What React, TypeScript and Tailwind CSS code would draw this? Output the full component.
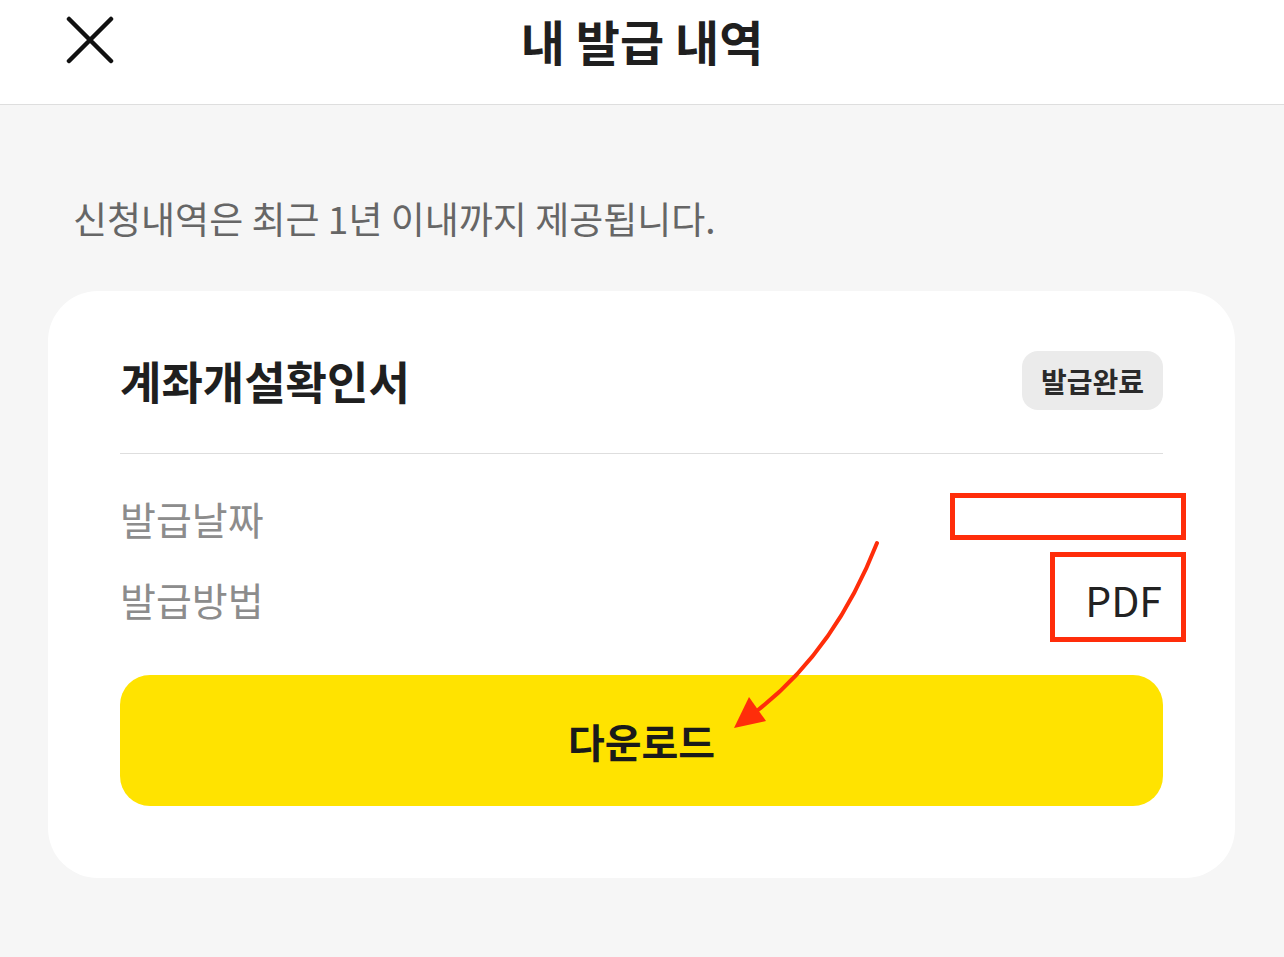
import React from "react";

const font = { fontFamily: '"Noto Sans CJK KR", "Noto Sans", sans-serif' };

const CloseIcon: React.FC = () => (
  <svg width="48" height="48" viewBox="0 0 48 48" fill="none">
    <path d="M3 3L45 45M45 3L3 45" stroke="#111" strokeWidth="4.5" strokeLinecap="round" />
  </svg>
);

const InfoRow: React.FC<{ label: string; value?: string }> = ({ label, value }) => (
  <div className="flex items-center justify-between h-[81px]">
    <span className="text-[39px] leading-none text-[#8c8c8c]">{label}</span>
    <span className="text-[41px] leading-none text-[#222] pr-[1px]">{value}</span>
  </div>
);

const App: React.FC = () => {
  return (
    <div className="relative min-h-[957px] w-full bg-[#f6f6f6]" style={font}>
      {/* header */}
      <header className="bg-white h-[105px] border-b border-[#dedede] pt-[16px]">
        <div className="flex items-center h-[48px]">
          <div className="w-[114px] pl-[66px] shrink-0">
            <CloseIcon />
          </div>
          <h1 className="flex-1 text-center text-[48px] leading-[48px] font-bold text-[#1f1f1f]">
            내 발급 내역
          </h1>
          <div className="w-[114px] shrink-0" />
        </div>
      </header>

      <p className="pt-[91px] pl-[73px] text-[37px] leading-[44px] text-[#666]">
        신청내역은 최근 1년 이내까지 제공됩니다.
      </p>

      {/* card */}
      <section className="relative mt-[51px] ml-[48px] w-[1187px] bg-white rounded-[50px] pt-[60px] px-[72px] pb-[72px]">
        <div className="flex items-center justify-between h-[59px]">
          <h2 className="text-[45px] leading-none font-bold text-[#1f1f1f]">계좌개설확인서</h2>
          <span className="h-[59px] px-[19px] flex items-center rounded-[16px] bg-[#ebebeb] text-[28px] font-bold text-[#2a2a2a]">
            발급완료
          </span>
        </div>
        <div className="mt-[43px] h-px bg-[#dedede]" />

        <div className="mt-[24px]">
          <InfoRow label="발급날짜" />
          <InfoRow label="발급방법" value="PDF" />
        </div>

        <button className="mt-[35px] w-full h-[131px] rounded-[30px] bg-[#ffe300] text-[40px] font-bold text-[#1a1a1a]">
          다운로드
        </button>

        {/* annotation boxes */}
        <div className="absolute left-[902px] top-[202px] w-[236px] h-[47px] border-[5px] border-[#ff2d0a]" />
        <div className="absolute left-[1002px] top-[261px] w-[136px] h-[90px] border-[5px] border-[#ff2d0a]" />
      </section>

      {/* annotation arrow */}
      <svg
        className="absolute left-0 top-0 pointer-events-none"
        width="1284"
        height="957"
        viewBox="0 0 1284 957"
        fill="none"
      >
        <path d="M877 543 Q835 650 758 710" stroke="#ff2d0a" strokeWidth="4" strokeLinecap="round" />
        <path d="M734 728 L749 697 L766 721 Z" fill="#ff2d0a" />
      </svg>
    </div>
  );
};

export default App;
